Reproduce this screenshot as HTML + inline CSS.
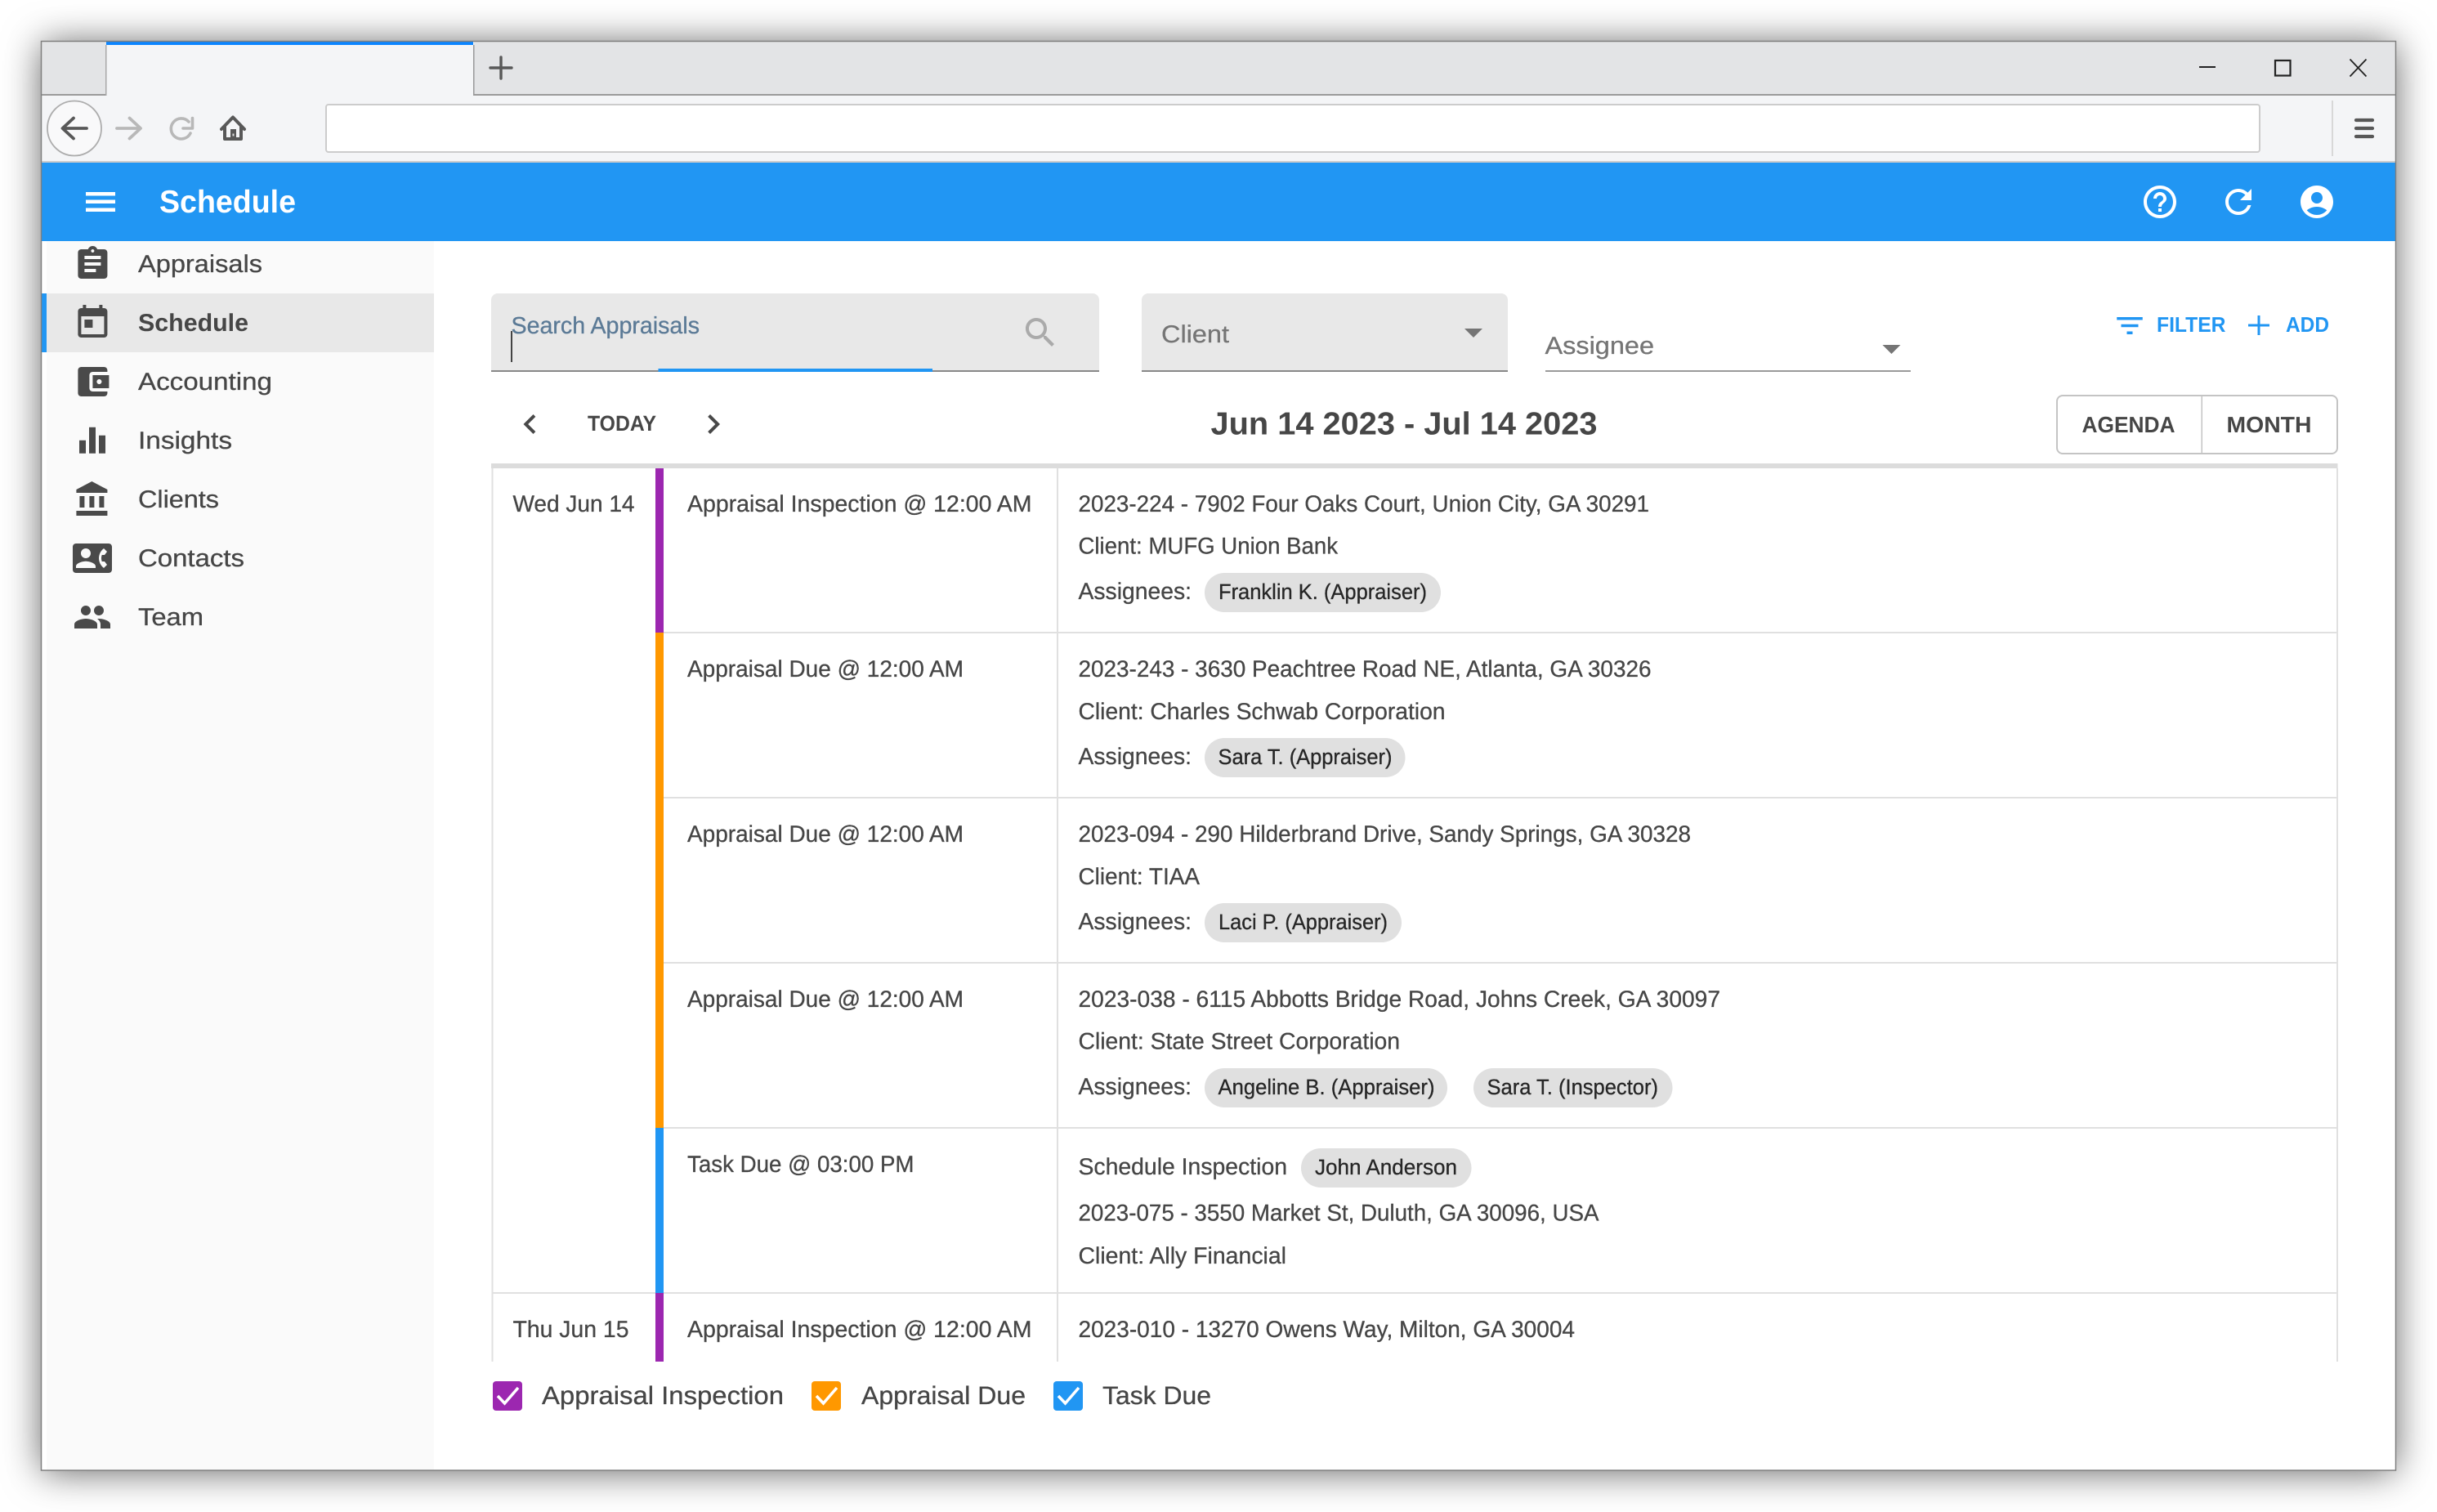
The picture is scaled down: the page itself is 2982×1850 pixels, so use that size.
<!DOCTYPE html>
<html><head><meta charset="utf-8"><title>Schedule</title>
<style>
html,body{margin:0;padding:0;background:#fff;width:2982px;height:1850px;overflow:hidden}
#sh{position:absolute;left:51px;top:51px;width:2880px;height:1748px;box-shadow:0 2px 46px rgba(0,0,0,.62);border-radius:2px;background:#fff}
svg{position:absolute;left:0;top:0}
text{font-family:"Liberation Sans",sans-serif;text-rendering:geometricPrecision;fill:#464646;font-size:28.5px;stroke:#464646;stroke-width:.3px}
.n{font-size:30px;fill:#464646}
.m{font-weight:bold;stroke-width:0}
.c{font-size:26.5px;fill:#262626;stroke:#262626}
.b{fill:#2196f3;font-size:26px;font-weight:bold;stroke-width:0}
.l{font-size:31px}
</style></head><body>
<div id="sh"></div>
<svg width="2982" height="1850" viewBox="0 0 2982 1850" xmlns="http://www.w3.org/2000/svg">
<!-- window -->
<rect x="51" y="51" width="2880" height="1748" fill="#fff"/>
<!-- tab strip -->
<rect x="51" y="51" width="2880" height="66" fill="#e3e4e6"/>
<rect x="51" y="115" width="2880" height="2" fill="#9a9a9a"/>
<rect x="130" y="51" width="450" height="66" fill="#f4f5f7"/>
<rect x="130" y="51" width="449" height="4" fill="#0a84ff"/>
<rect x="129" y="55" width="1.5" height="62" fill="#a8a8a8"/>
<rect x="579" y="55" width="1.5" height="62" fill="#999"/>
<path d="M613 70V96M600 83H626" stroke="#585858" stroke-width="3.4" stroke-linecap="round" fill="none"/>
<path d="M2691 82H2711" stroke="#222" stroke-width="2" fill="none"/>
<rect x="2784" y="74" width="18.500" height="18.500" fill="none" stroke="#222" stroke-width="2.200"/>
<path d="M2875.500 72.500L2895.500 93.500M2895.500 72.500L2875.500 93.500" stroke="#222" stroke-width="1.800" fill="none"/>
<!-- toolbar -->
<rect x="51" y="117" width="2880" height="80" fill="#f4f5f7"/>
<rect x="51" y="197" width="2880" height="2" fill="#cccccc"/>
<ellipse cx="91" cy="157" rx="33" ry="33.500" fill="#f9f9fa" stroke="#adadad" stroke-width="1.800"/>
<path d="M106 157H77M90 144.500L76.500 157L90 169.500" stroke="#585858" stroke-width="3.800" stroke-linecap="round" stroke-linejoin="round" fill="none"/>
<path d="M143 157H171.500M158.500 144.500L172 157L158.500 169.500" stroke="#b8b8b8" stroke-width="3.800" stroke-linecap="round" stroke-linejoin="round" fill="none"/>
<path d="M231 149A12.500 12.500 0 1 0 233 163M235.500 144.500V157H224" stroke="#b8b8b8" stroke-width="3.600" stroke-linecap="round" stroke-linejoin="round" fill="none"/>
<path d="M271 158L285 143.500L299 158M275 155V170H295V155" stroke="#585858" stroke-width="4" stroke-linecap="round" stroke-linejoin="round" fill="none"/>
<rect x="282" y="158" width="7" height="13" fill="#585858"/><rect x="284.500" y="163.500" width="2" height="3" fill="#ddd"/>
<rect x="399" y="128" width="2366" height="58" rx="3" fill="#fff" stroke="#cccccc" stroke-width="2"/>
<rect x="2853" y="123" width="2" height="68" fill="#d8d8d8"/>
<path d="M2883 147H2903M2883 157H2903M2883 167H2903" stroke="#585858" stroke-width="4.200" stroke-linecap="round" fill="none"/>
<!-- app bar -->
<rect x="51" y="199" width="2880" height="96" fill="#2196f3"/>
<path d="M105 235H141V239.500H105zM105 244.500H141V249H105zM105 254.500H141V259H105z" fill="#fff"/>
<text x="195" y="260" class="m" style="fill:#fff;font-size:39px" textLength="167" lengthAdjust="spacingAndGlyphs">Schedule</text>
<g fill="#fff">
<path transform="translate(2619 223) scale(2)" d="M11 18h2v-2h-2v2zm1-16C6.48 2 2 6.48 2 12s4.48 10 10 10 10-4.48 10-10S17.52 2 12 2zm0 18c-4.41 0-8-3.59-8-8s3.59-8 8-8 8 3.59 8 8-3.59 8-8 8zm0-14c-2.21 0-4 1.790-4 4h2c0-1.100.9-2 2-2s2 .9 2 2c0 2-3 1.750-3 5h2c0-2.250 3-2.500 3-5 0-2.210-1.790-4-4-4z"/>
<path transform="translate(2715 223) scale(2)" d="M17.650 6.350C16.200 4.900 14.210 4 12 4c-4.420 0-7.990 3.580-7.990 8s3.570 8 7.990 8c3.730 0 6.840-2.550 7.730-6h-2.080c-.82 2.330-3.040 4-5.650 4-3.310 0-6-2.690-6-6s2.690-6 6-6c1.660 0 3.140.69 4.220 1.780L13 11h7V4l-2.350 2.350z"/>
<path transform="translate(2811 223) scale(2)" d="M12 2C6.480 2 2 6.480 2 12s4.480 10 10 10 10-4.480 10-10S17.520 2 12 2zm0 4c1.930 0 3.500 1.570 3.500 3.500S13.930 13 12 13s-3.500-1.570-3.500-3.500S10.070 6 12 6zm0 14c-2.030 0-4.430-.82-6.140-2.880C7.550 15.800 9.680 15 12 15s4.450.8 6.140 2.120C16.430 19.180 14.030 20 12 20z"/>
</g>
<!-- sidebar -->
<rect x="57" y="295" width="474" height="1503" fill="#fafafa"/>
<rect x="57" y="359" width="474" height="72" fill="#e8e8e8"/>
<rect x="51" y="359" width="6" height="72" fill="#2196f3"/>
<g fill="#4a4a4a">
<path transform="translate(89.400 299) scale(2)" d="M19 3h-4.180C14.400 1.840 13.300 1 12 1c-1.300 0-2.400.84-2.820 2H5c-1.100 0-2 .9-2 2v14c0 1.100.9 2 2 2h14c1.100 0 2-.9 2-2V5c0-1.100-.9-2-2-2zm-7 0c.55 0 1 .45 1 1s-.45 1-1 1-1-.45-1-1 .45-1 1-1zm2 14H7v-2h7v2zm3-4H7v-2h10v2zm0-4H7V7h10v2z"/>
<path transform="translate(89.400 371) scale(2)" d="M19 3h-1V1h-2v2H8V1H6v2H5c-1.110 0-1.990.9-1.990 2L3 19c0 1.100.89 2 2 2h14c1.100 0 2-.9 2-2V5c0-1.100-.9-2-2-2zm0 16H5V8h14v11zM7 10h5v5H7z"/>
<path transform="translate(89.400 443) scale(2)" d="M21 18v1c0 1.100-.9 2-2 2H5c-1.110 0-2-.9-2-2V5c0-1.100.89-2 2-2h14c1.100 0 2 .9 2 2v1h-9c-1.110 0-2 .9-2 2v8c0 1.100.89 2 2 2h9zm-9-2h10V8H12v8zm4-2.500c-.83 0-1.500-.67-1.500-1.500s.67-1.500 1.500-1.500 1.500.67 1.500 1.500-.67 1.500-1.500 1.500z"/>
<path transform="translate(89 514.700) scale(2)" d="M10 20h4V4h-4v16zm-6 0h4v-8H4v8zM16 9v11h4V9h-4z"/>
<path transform="translate(89.400 587) scale(2)" d="M4 10v7h3v-7H4zm6 0v7h3v-7h-3zM2 22h19v-3H2v3zm14-12v7h3v-7h-3zm-4.500-9L2 6v2h19V6l-9.500-5z"/>
<path transform="translate(89 659) scale(2)" d="M22 3H2C.9 3 0 3.900 0 5v14c0 1.100.9 2 2 2h20c1.100 0 1.990-.9 1.990-2L24 5c0-1.100-.9-2-2-2zM8 6c1.660 0 3 1.340 3 3s-1.340 3-3 3-3-1.340-3-3 1.340-3 3-3zm6 12H2v-1c0-2 4-3.100 6-3.100s6 1.100 6 3.100v1zm3.850-4h1.640L21 16l-1.990 1.990c-1.310-.98-2.280-2.380-2.730-3.990-.18-.64-.28-1.310-.28-2s.1-1.360.28-2c.45-1.620 1.420-3.010 2.730-3.990L21 8l-1.510 2h-1.640c-.22.63-.35 1.300-.35 2s.13 1.370.35 2z"/>
<path transform="translate(89 731) scale(2)" d="M16 11c1.660 0 2.990-1.340 2.990-3S17.660 5 16 5c-1.660 0-3 1.340-3 3s1.340 3 3 3zm-8 0c1.660 0 2.990-1.340 2.990-3S9.660 5 8 5C6.340 5 5 6.340 5 8s1.340 3 3 3zm0 2c-2.330 0-7 1.170-7 3.500V19h14v-2.500c0-2.330-4.670-3.500-7-3.500zm8 0c-.29 0-.62.02-.97.05 1.160.84 1.970 1.970 1.970 3.450V19h6v-2.500c0-2.330-4.670-3.500-7-3.500z"/>
</g>
<text class="n" x="169" y="333" textLength="152" lengthAdjust="spacingAndGlyphs">Appraisals</text>
<text class="n m" x="169" y="405" textLength="135" lengthAdjust="spacingAndGlyphs">Schedule</text>
<text class="n" x="169" y="477" textLength="164" lengthAdjust="spacingAndGlyphs">Accounting</text>
<text class="n" x="169" y="549" textLength="115" lengthAdjust="spacingAndGlyphs">Insights</text>
<text class="n" x="169" y="621" textLength="99" lengthAdjust="spacingAndGlyphs">Clients</text>
<text class="n" x="169" y="693" textLength="130" lengthAdjust="spacingAndGlyphs">Contacts</text>
<text class="n" x="169" y="765" textLength="80" lengthAdjust="spacingAndGlyphs">Team</text>
<!-- search -->
<path d="M601 455V367a8 8 0 0 1 8-8H1337a8 8 0 0 1 8 8V455z" fill="#e8e8e8"/>
<rect x="601" y="453" width="744" height="2" fill="#888"/>
<rect x="805.500" y="451" width="335.500" height="4" fill="#2196f3"/>
<text x="625.500" y="408" style="font-size:29px;fill:#5b7a96;stroke:#5b7a96" textLength="230.500" lengthAdjust="spacingAndGlyphs">Search Appraisals</text>
<rect x="625" y="405" width="2" height="38" fill="#444"/>
<path transform="translate(1249 383) scale(2)" fill="#aaa" d="M15.500 14h-.79l-.28-.27C15.410 12.590 16 11.110 16 9.500 16 5.910 13.090 3 9.500 3S3 5.910 3 9.500 5.910 16 9.500 16c1.610 0 3.090-.59 4.230-1.570l.27.28v.79l5 4.990L20.490 19l-4.990-5zm-6 0C7.010 14 5 11.990 5 9.500S7.010 5 9.500 5 14 7.010 14 9.500 11.990 14 9.500 14z"/>
<!-- client -->
<path d="M1397 455V367a8 8 0 0 1 8-8H1837a8 8 0 0 1 8 8V455z" fill="#e8e8e8"/>
<rect x="1397" y="453" width="448" height="2" fill="#888"/>
<text x="1421" y="419" style="font-size:30px;fill:#757575;stroke:#757575" textLength="83" lengthAdjust="spacingAndGlyphs">Client</text>
<path d="M1792 402H1814L1803 413z" fill="#757575"/>
<!-- assignee -->
<rect x="1891" y="453" width="447" height="2" fill="#9a9a9a"/>
<text x="1890.500" y="433" style="font-size:30px;fill:#757575;stroke:#757575" textLength="133.500" lengthAdjust="spacingAndGlyphs">Assignee</text>
<path d="M2303.500 422H2325.500L2314.500 433z" fill="#757575"/>
<!-- filter / add -->
<path transform="translate(2585 377.500) scale(1.750)" fill="#2196f3" d="M10 18h4v-2h-4v2zM3 6v2h18V6H3zm3 7h12v-2H6v2z"/>
<text class="b" x="2639" y="406" textLength="84.500" lengthAdjust="spacingAndGlyphs">FILTER</text>
<path d="M2751 398H2777M2764 386V410" stroke="#2196f3" stroke-width="3" fill="none"/>
<text class="b" x="2797" y="406" textLength="53" lengthAdjust="spacingAndGlyphs">ADD</text>
<!-- nav -->
<path transform="translate(624.500 495) scale(2)" fill="#484848" d="M15.410 7.410L14 6l-6 6 6 6 1.410-1.410L10.830 12z"/>
<text x="719" y="527" class="m" style="font-size:26.500px" textLength="84" lengthAdjust="spacingAndGlyphs">TODAY</text>
<path transform="translate(849 495) scale(2)" fill="#484848" d="M10 6L8.590 7.410 13.170 12l-4.580 4.590L10 18l6-6z"/>
<text x="1481.500" y="531.500" class="m" style="font-size:39px" textLength="473" lengthAdjust="spacingAndGlyphs">Jun 14 2023 - Jul 14 2023</text>
<rect x="2517" y="484" width="343" height="71" rx="7" fill="#fff" stroke="#c4c4c4" stroke-width="2"/>
<rect x="2693.500" y="484" width="1.500" height="71" fill="#c4c4c4"/>
<text x="2547.500" y="529" class="m" style="font-size:27.500px" textLength="114" lengthAdjust="spacingAndGlyphs">AGENDA</text>
<text x="2724.500" y="529" class="m" style="font-size:27.500px" textLength="104" lengthAdjust="spacingAndGlyphs">MONTH</text>
<!-- table -->
<rect x="601" y="567" width="2259.500" height="6" fill="#dcdcdc"/>
<rect x="601.500" y="573" width="2" height="1093" fill="#e0e0e0"/>
<rect x="1293" y="573" width="2" height="1093" fill="#e0e0e0"/>
<rect x="2859" y="573" width="2" height="1093" fill="#e0e0e0"/>
<rect x="812" y="773" width="2048" height="2" fill="#e0e0e0"/>
<rect x="812" y="975" width="2048" height="2" fill="#e0e0e0"/>
<rect x="812" y="1177" width="2048" height="2" fill="#e0e0e0"/>
<rect x="812" y="1379" width="2048" height="2" fill="#e0e0e0"/>
<rect x="603" y="1581" width="2257" height="2" fill="#e0e0e0"/>
<rect x="802" y="573" width="10" height="201" fill="#9c27b0"/>
<rect x="802" y="774" width="10" height="606" fill="#ff9800"/>
<rect x="802" y="1380" width="10" height="202" fill="#2196f3"/>
<rect x="802" y="1582" width="10" height="84" fill="#9c27b0"/>
<text x="627.500" y="626" textLength="149" lengthAdjust="spacingAndGlyphs">Wed Jun 14</text>
<text x="841" y="626" textLength="421.500" lengthAdjust="spacingAndGlyphs">Appraisal Inspection @ 12:00 AM</text>
<text x="1319.500" y="626" textLength="698.500" lengthAdjust="spacingAndGlyphs">2023-224 - 7902 Four Oaks Court, Union City, GA 30291</text>
<text x="1319.500" y="677.500" textLength="317.500" lengthAdjust="spacingAndGlyphs">Client: MUFG Union Bank</text>
<text x="1319.500" y="733" textLength="138.500" lengthAdjust="spacingAndGlyphs">Assignees:</text>
<rect x="1474" y="701" width="289" height="48" rx="24" fill="#e0e0e0"/>
<text class="c" x="1491" y="733" textLength="255" lengthAdjust="spacingAndGlyphs">Franklin K. (Appraiser)</text>

<text x="841" y="828" textLength="338" lengthAdjust="spacingAndGlyphs">Appraisal Due @ 12:00 AM</text>
<text x="1319.500" y="828" textLength="701" lengthAdjust="spacingAndGlyphs">2023-243 - 3630 Peachtree Road NE, Atlanta, GA 30326</text>
<text x="1319.500" y="880" textLength="449" lengthAdjust="spacingAndGlyphs">Client: Charles Schwab Corporation</text>
<text x="1319.500" y="935" textLength="138.500" lengthAdjust="spacingAndGlyphs">Assignees:</text>
<rect x="1474" y="903" width="245.500" height="48" rx="24" fill="#e0e0e0"/>
<text class="c" x="1490.500" y="935" textLength="213" lengthAdjust="spacingAndGlyphs">Sara T. (Appraiser)</text>

<text x="841" y="1030" textLength="338" lengthAdjust="spacingAndGlyphs">Appraisal Due @ 12:00 AM</text>
<text x="1319.500" y="1030" textLength="749.500" lengthAdjust="spacingAndGlyphs">2023-094 - 290 Hilderbrand Drive, Sandy Springs, GA 30328</text>
<text x="1319.500" y="1082" textLength="148.500" lengthAdjust="spacingAndGlyphs">Client: TIAA</text>
<text x="1319.500" y="1137" textLength="138.500" lengthAdjust="spacingAndGlyphs">Assignees:</text>
<rect x="1474" y="1105" width="241" height="48" rx="24" fill="#e0e0e0"/>
<text class="c" x="1491" y="1137" textLength="207" lengthAdjust="spacingAndGlyphs">Laci P. (Appraiser)</text>

<text x="841" y="1232" textLength="338" lengthAdjust="spacingAndGlyphs">Appraisal Due @ 12:00 AM</text>
<text x="1319.500" y="1232" textLength="785.500" lengthAdjust="spacingAndGlyphs">2023-038 - 6115 Abbotts Bridge Road, Johns Creek, GA 30097</text>
<text x="1319.500" y="1283.500" textLength="393.500" lengthAdjust="spacingAndGlyphs">Client: State Street Corporation</text>
<text x="1319.500" y="1339" textLength="138.500" lengthAdjust="spacingAndGlyphs">Assignees:</text>
<rect x="1474" y="1307" width="297" height="48" rx="24" fill="#e0e0e0"/>
<text class="c" x="1490.500" y="1339" textLength="265" lengthAdjust="spacingAndGlyphs">Angeline B. (Appraiser)</text>
<rect x="1803" y="1307" width="243.500" height="48" rx="24" fill="#e0e0e0"/>
<text class="c" x="1819.500" y="1339" textLength="209.500" lengthAdjust="spacingAndGlyphs">Sara T. (Inspector)</text>

<text x="841" y="1434" textLength="277.500" lengthAdjust="spacingAndGlyphs">Task Due @ 03:00 PM</text>
<text x="1319.500" y="1437" textLength="255.500" lengthAdjust="spacingAndGlyphs">Schedule Inspection</text>
<rect x="1592" y="1405" width="208.500" height="48" rx="24" fill="#e0e0e0"/>
<text class="c" x="1609" y="1437" textLength="174" lengthAdjust="spacingAndGlyphs">John Anderson</text>
<text x="1319.500" y="1493.500" textLength="637" lengthAdjust="spacingAndGlyphs">2023-075 - 3550 Market St, Duluth, GA 30096, USA</text>
<text x="1319.500" y="1546" textLength="254.500" lengthAdjust="spacingAndGlyphs">Client: Ally Financial</text>

<text x="627.500" y="1636" textLength="142" lengthAdjust="spacingAndGlyphs">Thu Jun 15</text>
<text x="841" y="1636" textLength="421.500" lengthAdjust="spacingAndGlyphs">Appraisal Inspection @ 12:00 AM</text>
<text x="1319.500" y="1636" textLength="607.500" lengthAdjust="spacingAndGlyphs">2023-010 - 13270 Owens Way, Milton, GA 30004</text>
<!-- legend -->
<rect x="603" y="1690" width="36" height="36" rx="4" fill="#9c27b0"/>
<path d="M609 1708L617.500 1717L634 1698" fill="none" stroke="#fff" stroke-width="3.500"/>
<text class="l" x="663" y="1718" textLength="296" lengthAdjust="spacingAndGlyphs">Appraisal Inspection</text>
<rect x="993" y="1690" width="36" height="36" rx="4" fill="#ff9800"/>
<path d="M999 1708L1007.500 1717L1024 1698" fill="none" stroke="#fff" stroke-width="3.500"/>
<text class="l" x="1054" y="1718" textLength="201" lengthAdjust="spacingAndGlyphs">Appraisal Due</text>
<rect x="1289" y="1690" width="36" height="36" rx="4" fill="#2196f3"/>
<path d="M1295 1708L1303.500 1717L1320 1698" fill="none" stroke="#fff" stroke-width="3.500"/>
<text class="l" x="1349" y="1718" textLength="133" lengthAdjust="spacingAndGlyphs">Task Due</text>
<!-- window border -->
<rect x="50.500" y="50.500" width="2881" height="1748.500" fill="none" stroke="#808080" stroke-width="1.500"/>
</svg>
</body></html>
